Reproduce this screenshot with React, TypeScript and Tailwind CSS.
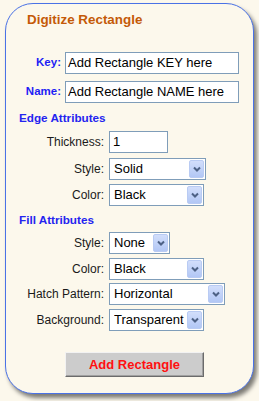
const font = { fontFamily: '"Liberation Sans", Arial, sans-serif' };

const Arrow = () => (
  <span className="flex h-[18px] w-[15px] shrink-0 items-center justify-center rounded-[2px] border border-[#b9cbf3] bg-gradient-to-b from-[#d2defb] to-[#b2c7f5]">
    <svg width="8" height="6" viewBox="0 0 8 6">
      <path d="M1 1.5 L4 4.5 L7 1.5" fill="none" stroke="#4d6185" strokeWidth="2" />
    </svg>
  </span>
);

const Select = ({ value, width }: { value: string; width: string }) => (
  <div
    className={`flex h-[22px] items-center justify-between border border-[#7f9db9] bg-white pl-[4px] pr-[1px] text-[13px] text-black ${width}`}
  >
    <span className="overflow-hidden whitespace-nowrap">{value}</span>
    <Arrow />
  </div>
);

const Row = ({ label, children, mt }: { label: string; children: React.ReactNode; mt: string }) => (
  <div className={`flex items-center ${mt}`}>
    <span className="w-[98px] text-right text-[12px] text-[#1a1a1a]">{label}</span>
    <div className="ml-[5px]">{children}</div>
  </div>
);

export default function App() {
  return (
    <div className="h-[401px] w-[259px] overflow-hidden bg-[#fcf8ec] pt-[3px] pl-[5px]" style={font}>
      <div className="flex h-[391px] w-[249px] flex-col rounded-[28px] border border-[#4a72e6] bg-[#fcf8ec] shadow-[3px_4px_4px_rgba(0,0,0,0.5)]">
        <div className="ml-[21px] mt-[8px] text-[13.4px] font-bold leading-[16px] text-[#c45a08]">
          Digitize Rectangle
        </div>

        <div className="mt-[24px] flex items-center">
          <span className="w-[55px] text-right text-[11.5px] font-bold text-[#1e1ef5]">Key:</span>
          <div className="ml-[4px] flex h-[22px] w-[174px] items-center border border-[#7f9db9] bg-white pl-[2px] text-[13px] text-black">
            Add Rectangle KEY here
          </div>
        </div>
        <div className="mt-[7px] flex items-center">
          <span className="w-[55px] text-right text-[11.5px] font-bold text-[#1e1ef5]">Name:</span>
          <div className="ml-[4px] flex h-[22px] w-[174px] items-center border border-[#7f9db9] bg-white pl-[2px] text-[13px] text-black">
            Add Rectangle NAME here
          </div>
        </div>

        <div className="ml-[13px] mt-[8px] text-[11.7px] font-bold leading-[14px] text-[#2424f0]">Edge Attributes</div>
        <Row label="Thickness:" mt="mt-[6px]">
          <div className="flex h-[22px] w-[59px] items-center border border-[#7f9db9] bg-white pl-[3px] text-[13px] text-black">
            1
          </div>
        </Row>
        <Row label="Style:" mt="mt-[5px]">
          <Select value="Solid" width="w-[97px]" />
        </Row>
        <Row label="Color:" mt="mt-[4px]">
          <Select value="Black" width="w-[95px]" />
        </Row>

        <div className="ml-[13px] mt-[7px] text-[11.7px] font-bold leading-[14px] text-[#2424f0]">Fill Attributes</div>
        <Row label="Style:" mt="mt-[5px]">
          <Select value="None" width="w-[61px]" />
        </Row>
        <Row label="Color:" mt="mt-[4px]">
          <Select value="Black" width="w-[95px]" />
        </Row>
        <Row label="Hatch Pattern:" mt="mt-[3px]">
          <Select value="Horizontal" width="w-[116px]" />
        </Row>
        <Row label="Background:" mt="mt-[4px]">
          <Select value="Transparent" width="w-[95px]" />
        </Row>

        <button className="ml-[59px] mt-[21px] h-[25px] w-[139px] border border-b-[#6b6b6b] border-l-[#f2f2f2] border-r-[#6b6b6b] border-t-[#f2f2f2] bg-[#cccccc] text-[13px] font-bold text-[#ff1010] shadow-[inset_-1px_-1px_0_#a0a0a0]">
          Add Rectangle
        </button>
      </div>
    </div>
  );
}
